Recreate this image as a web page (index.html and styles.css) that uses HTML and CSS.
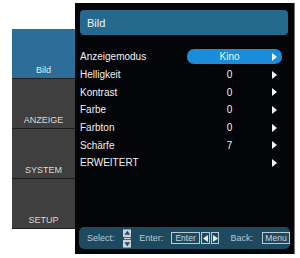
FILE: index.html
```html
<!DOCTYPE html>
<html>
<head>
    <title>OSD Bild</title>
    <link rel="stylesheet" href="styles.css">
</head>
<body>

    <div class="osd">
        <div class="tabs">
            <div class="tab active">Bild</div>
            <div class="tab">ANZEIGE</div>
            <div class="tab">SYSTEM</div>
            <div class="tab">SETUP</div>
        </div>

        <div class="panel">
            <div class="header">Bild</div>

            <div class="rows">
                <div class="row">
                    <span class="label">Anzeigemodus</span>
                    <span class="value selected"><span class="val">Kino</span><span class="arrow"></span></span>
                </div>
                <div class="row">
                    <span class="label">Helligkeit</span>
                    <span class="value"><span class="val">0</span><span class="arrow"></span></span>
                </div>
                <div class="row">
                    <span class="label">Kontrast</span>
                    <span class="value"><span class="val">0</span><span class="arrow"></span></span>
                </div>
                <div class="row">
                    <span class="label">Farbe</span>
                    <span class="value"><span class="val">0</span><span class="arrow"></span></span>
                </div>
                <div class="row">
                    <span class="label">Farbton</span>
                    <span class="value"><span class="val">0</span><span class="arrow"></span></span>
                </div>
                <div class="row">
                    <span class="label">Schärfe</span>
                    <span class="value"><span class="val">7</span><span class="arrow"></span></span>
                </div>
                <div class="row">
                    <span class="label">ERWEITERT</span>
                    <span class="value"><span class="val"></span><span class="arrow"></span></span>
                </div>
            </div>

            <div class="footer">
                <span class="hint">Select:</span>
                <svg class="updown" width="9" height="19" viewBox="0 0 9 19">
                    <rect x="0" y="0" width="9" height="8" fill="#c9d3d9"/>
                    <polygon points="4.5,1.5 7.5,5.5 1.5,5.5" fill="#1e4a60"/>
                    <rect x="0" y="11" width="9" height="8" fill="#c9d3d9"/>
                    <polygon points="1.5,13.5 7.5,13.5 4.5,17.5" fill="#1e4a60"/>
                    <rect x="1" y="8.8" width="7" height="1.4" fill="#c9d3d9"/>
                </svg>
                <span class="hint enter">Enter:</span>
                <span class="key">Enter</span>
                <span class="key small"><svg width="5" height="7" viewBox="0 0 5 7"><polygon points="5,0 5,7 0,3.5" fill="#e4eaee"/></svg></span>
                <span class="key small"><svg width="5" height="7" viewBox="0 0 5 7"><polygon points="0,0 0,7 5,3.5" fill="#e4eaee"/></svg></span>
                <span class="hint back">Back:</span>
                <span class="key">Menu</span>
            </div>
        </div>
    </div>

</body>
</html>
```

FILE: styles.css
```css
body {
    margin: 0;
    padding: 0;
    background-color: #fff;
    font-family: "Liberation Sans", Arial, sans-serif;
}

.osd {
    display: flex;
    align-items: flex-start;
    padding-top: 3px;
    padding-left: 12px;
}

.tabs {
    display: flex;
    flex-direction: column;
    width: 63px;
    margin-top: 26px;
}

.tab {
    height: 50px;
    box-sizing: border-box;
    display: flex;
    align-items: flex-end;
    justify-content: center;
    padding-bottom: 3px;
    background-color: #3f3f3f;
    border-bottom: 1px solid #1c1c1c;
    color: #d8d8d8;
    font-size: 9px;
}

.tab.active {
    background-color: #2c6e97;
    border-bottom-color: #222;
    color: #e4ecf2;
}

.panel {
    width: 220px;
    height: 251px;
    box-sizing: border-box;
    display: flex;
    flex-direction: column;
    padding: 7px 6px 5px 4px;
    background-color: #030509;
    border-right: 1px solid #777;
}

.header {
    height: 25px;
    margin-left: 1px;
    display: flex;
    align-items: center;
    padding-left: 7px;
    border-radius: 4px;
    background-color: #26698f;
    color: #eef3f6;
    font-size: 11px;
}

.rows {
    margin-top: 13px;
    display: flex;
    flex-direction: column;
}

.row {
    height: 17.7px;
    display: flex;
    align-items: center;
    color: #f2f2f2;
    font-size: 10px;
}

.label {
    width: 107px;
    margin-left: 1px;
}

.value {
    width: 95px;
    height: 15px;
    display: flex;
    align-items: center;
    border-radius: 7px;
}

.value.selected {
    background-color: #1b8cda;
}

.val {
    flex: 1;
    text-align: center;
}

.arrow {
    flex-shrink: 0;
    width: 0;
    height: 0;
    margin-right: 5px;
    border-top: 4px solid transparent;
    border-bottom: 4px solid transparent;
    border-left: 5px solid #f4f4f4;
}

.footer {
    margin-top: auto;
    margin-left: 0;
    height: 22px;
    width: 211px;
    display: flex;
    align-items: center;
    padding-left: 8px;
    box-sizing: border-box;
    border-radius: 5px;
    background-color: #1e4a60;
    color: #b9c9d3;
    font-size: 9px;
}

.updown {
    margin-left: 8px;
}

.hint.enter {
    margin-left: 8px;
}

.hint.back {
    margin-left: 11px;
    margin-right: 9px;
}

.key {
    height: 10px;
    display: flex;
    align-items: center;
    justify-content: center;
    padding: 0 2px;
    margin-left: 8px;
    border: 1px solid #b9c9d3;
    color: #c9d6de;
    font-size: 8.5px;
    line-height: 10px;
}

.key.small {
    width: 7px;
    padding: 0;
    margin-left: 1px;
}

.hint.enter + .key {
    width: 24px;
}

.hint.back + .key {
    margin-left: 0;
    width: 23px;
}
```
